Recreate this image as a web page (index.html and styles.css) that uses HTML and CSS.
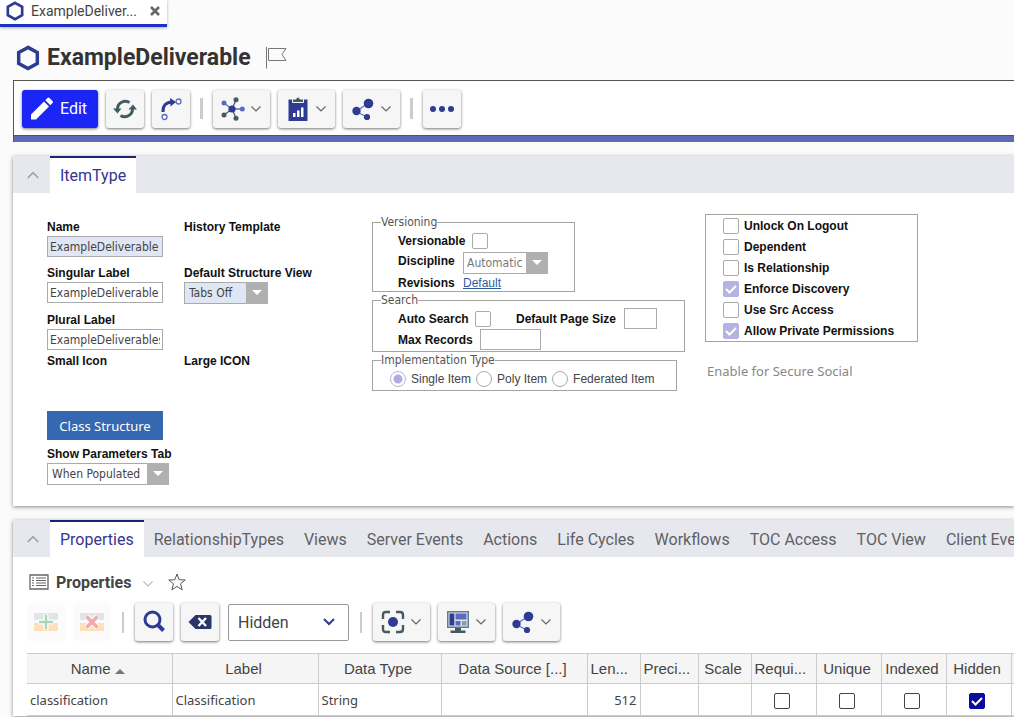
FILE: index.html
```html
<!DOCTYPE html>
<html lang="en">
<head>
<meta charset="utf-8">
<title>ExampleDeliverable</title>
<link rel="stylesheet" href="styles.css">
</head>
<body>
<svg class="defs" aria-hidden="true">
  <symbol id="hex" viewBox="0 0 24 24"><path d="M12 2.200 20.600 7v10L12 21.800 3.400 17V7z" fill="none" stroke="#2e3b93" stroke-width="3.200"/></symbol>
  <symbol id="down" viewBox="0 0 12 8"><path d="M1.500 1.500 6 6l4.500-4.500" fill="none" stroke="currentColor" stroke-width="1.200"/></symbol>
  <symbol id="share" viewBox="0 0 24 24"><path d="M5 14.500 17.500 6M5 14.500l11 5.500" stroke="#5c6bc0" stroke-width="1.200"/><g fill="#2e3b93"><circle cx="5.500" cy="14" r="4.200"/><circle cx="17.500" cy="6.500" r="4.800"/><circle cx="16" cy="20" r="3.100"/></g></symbol>
</svg>

<nav class="window-tabs">
  <div class="window-tab">
    <svg class="i20"><use href="#hex"/></svg>
    <span>ExampleDeliver...</span>
    <button class="bare close" aria-label="Close tab"><svg width="10" height="10" viewBox="0 0 10 10"><path d="M1 1l8 8M9 1 1 9" stroke="#666" stroke-width="2.600"/></svg></button>
  </div>
</nav>

<main>
  <header class="title">
    <svg class="i26"><use href="#hex"/></svg>
    <h1>ExampleDeliverable</h1>
    <button class="bare flag" aria-label="Flag item"><svg width="22" height="22" viewBox="0 0 22 22" fill="none" stroke="#777"><path d="M1.500 0v21.500M3.500 1.500H21l-4 6 4 6H3.500z"/></svg></button>
  </header>

  <div class="toolbar" role="toolbar" aria-label="Item actions">
    <button class="btn edit"><svg width="24" height="24" viewBox="0 0 24 24" fill="#fff"><path d="M1 17.500 14 4.500l5 5L6 22.500H1zM15.300 3.200 17.500 1q1-1 2 0l3 3q1 1 0 2l-2.200 2.200z"/></svg>Edit</button>
    <button class="btn" aria-label="Refresh"><svg width="24" height="24" viewBox="0 0 24 24" fill="none" stroke="#455a64" stroke-width="3"><path d="M4.500 12A7.800 7.800 0 0 1 16.500 5.500M19.500 12A7.800 7.800 0 0 1 7.500 18.500"/><path d="M0 11.500h8.500l-4 5zM15.500 12.500H24l-4-5z" fill="#455a64" stroke="none"/></svg></button>
    <button class="btn" aria-label="Promote"><svg width="22" height="24" viewBox="0 0 22 24" fill="none"><path d="M3 15Q2.500 5.500 12 5" stroke="#2e3b93" stroke-width="3"/><path d="M10 1l6 4-5.500 4.500z" fill="#2e3b93"/><circle cx="18.500" cy="4.500" r="2.500" stroke="#5c6bc0" stroke-width="1.300"/><circle cx="4.500" cy="20" r="2.500" stroke="#5c6bc0" stroke-width="1.300"/></svg></button>
    <span class="sep"></span>
    <button class="btn menu" aria-label="Navigate"><svg width="24" height="24" viewBox="0 0 24 24"><path d="M11 12 3 6M11 12h10" stroke="#5c6bc0" stroke-width="1.300"/><path d="M11 12 15 3M11 12 3 18M11 12l4 9" stroke="#455a64" stroke-width="1.300"/><g fill="#455a64"><circle cx="15" cy="2.700" r="2.500"/><circle cx="3" cy="18" r="2.500"/><circle cx="15" cy="21.300" r="2.500"/></g><g fill="#5c6bc0"><circle cx="3" cy="6" r="2.500"/><circle cx="21.300" cy="12" r="2.500"/></g><circle cx="11" cy="12" r="3.600" fill="#2e3b93"/></svg><svg class="down"><use href="#down"/></svg></button>
    <button class="btn menu" aria-label="Reports"><svg width="24" height="26" viewBox="0 0 24 26"><path d="M2.500 3.500h19V25h-19z" fill="#2e3b93"/><path d="M6.500 3H10a2 2 0 0 1 4 0h3.500v3.500h-11z" fill="#455a64" stroke="#f5f5f5" stroke-width="1"/><path d="M7 17h2.500v4H7zM11 14.500h2.500V21H11zM15 11.500h2.500V21H15z" fill="#fff"/></svg><svg class="down"><use href="#down"/></svg></button>
    <button class="btn menu" aria-label="Share"><svg class="i24"><use href="#share"/></svg><svg class="down"><use href="#down"/></svg></button>
    <span class="sep"></span>
    <button class="btn" aria-label="More"><svg width="24" height="8" viewBox="0 0 24 8" fill="#2e3b93"><circle cx="3" cy="4" r="3"/><circle cx="12" cy="4" r="3"/><circle cx="21" cy="4" r="3"/></svg></button>
  </div>

  <section class="panel">
    <div class="tabs" role="tablist">
      <button class="bare collapse" aria-label="Collapse form"><svg class="down up"><use href="#down"/></svg></button>
      <button class="tab active" role="tab">ItemType</button>
    </div>
    <form class="form">
      <div class="fields">
        <div class="field"><label for="name">Name</label><input id="name" class="text filled" value="ExampleDeliverable"></div>
        <div class="field"><span class="label">History Template</span></div>
        <div class="field"><label for="singular">Singular Label</label><input id="singular" class="text" value="ExampleDeliverable"></div>
        <div class="field"><label for="view">Default Structure View</label><span class="drop tabs-off"><select id="view"><option>Tabs Off</option></select></span></div>
        <div class="field"><label for="plural">Plural Label</label><input id="plural" class="text" value="ExampleDeliverables"></div>
        <div class="field"></div>
        <div class="field icon-field"><span class="label">Small Icon</span></div>
        <div class="field icon-field"><span class="label">Large ICON</span></div>
        <button type="button" class="class-btn">Class Structure</button>
        <div class="field params"><label for="params">Show Parameters Tab</label><span class="drop"><select id="params"><option>When Populated</option></select></span></div>
      </div>
      <div class="groups">
        <fieldset class="w-version">
          <legend>Versioning</legend>
          <div class="row"><label for="versionable" class="wide">Versionable</label><input id="versionable" type="checkbox" class="check"></div>
          <div class="row"><label for="discipline" class="raised">Discipline</label><span class="drop grey"><select id="discipline"><option>Automatic</option></select></span></div>
          <div class="row short"><span class="label">Revisions</span><a href="#">Default</a></div>
        </fieldset>
        <fieldset class="w-search">
          <legend>Search</legend>
          <div class="row"><label for="auto" class="auto">Auto Search</label><input id="auto" type="checkbox" class="check"><label for="page" class="page">Default Page Size</label><input id="page" class="text tiny"></div>
          <div class="row"><label for="max" class="max">Max Records</label><input id="max" class="text small"></div>
        </fieldset>
        <fieldset class="w-impl">
          <legend>Implementation Type</legend>
          <div class="row radios">
            <label><input type="radio" name="impl" checked>Single Item</label>
            <label><input type="radio" name="impl">Poly Item</label>
            <label><input type="radio" name="impl">Federated Item</label>
          </div>
        </fieldset>
      </div>
      <div class="flags">
        <div class="flag-box">
          <label><input type="checkbox" class="check">Unlock On Logout</label>
          <label><input type="checkbox" class="check">Dependent</label>
          <label><input type="checkbox" class="check">Is Relationship</label>
          <label><input type="checkbox" class="check" checked>Enforce Discovery</label>
          <label><input type="checkbox" class="check">Use Src Access</label>
          <label><input type="checkbox" class="check" checked>Allow Private Permissions</label>
        </div>
        <p class="social">Enable for Secure Social</p>
      </div>
    </form>
  </section>

  <section class="panel">
    <div class="tabs" role="tablist">
      <button class="bare collapse" aria-label="Collapse relationships"><svg class="down up"><use href="#down"/></svg></button>
      <button class="tab active" role="tab">Properties</button>
      <button class="tab" role="tab">RelationshipTypes</button>
      <button class="tab" role="tab">Views</button>
      <button class="tab" role="tab">Server Events</button>
      <button class="tab" role="tab">Actions</button>
      <button class="tab" role="tab">Life Cycles</button>
      <button class="tab" role="tab">Workflows</button>
      <button class="tab" role="tab">TOC Access</button>
      <button class="tab" role="tab">TOC View</button>
      <button class="tab" role="tab">Client Events</button>
    </div>
    <div class="grid-title">
      <svg width="20" height="16" viewBox="0 0 20 16" fill="none" stroke="#666"><path d="M1 1h18v14H1z" stroke-width="1.300"/><path d="M3 4h2M7 4h10M3 6.500h2M7 6.500h10M3 9h2M7 9h10M3 11.500h2M7 11.500h10" stroke-width="1.200"/></svg>
      <h2>Properties</h2>
      <button class="bare pale" aria-label="Properties menu"><svg class="down"><use href="#down"/></svg></button>
      <button class="bare" aria-label="Favorite"><svg width="18" height="18" viewBox="0 0 18 18"><path d="M9 1l2.200 5.700 6 .3-4.700 3.800 1.700 6L9 13.400l-5.200 3.400 1.700-6L.8 7l6-.3z" fill="none" stroke="#555"/></svg></button>
    </div>
    <div class="grid-tools" role="toolbar" aria-label="Grid actions">
      <button class="btn off" disabled aria-label="Add row"><svg width="26" height="22" viewBox="0 0 26 22"><path d="M1 2h24v7H1z" fill="#b8bfc6"/><path d="M1 12h24v8H1z" fill="#f9b24d"/><path d="M13 3.500v15M5.500 11h15" stroke="#fff" stroke-width="5"/><path d="M13 4v14M6 11h14" stroke="#2e9b4f" stroke-width="2.400"/></svg></button>
      <button class="btn off" disabled aria-label="Delete row"><svg width="26" height="22" viewBox="0 0 26 22"><path d="M1 2h24v7H1z" fill="#b8bfc6"/><path d="M1 12h24v8H1z" fill="#f9b24d"/><path d="M7.500 5.500l11 11M18.500 5.500l-11 11" stroke="#fff" stroke-width="5.500"/><path d="M7.500 5.500l11 11M18.500 5.500l-11 11" stroke="#d32f2f" stroke-width="3.600"/></svg></button>
      <span class="sep thin"></span>
      <button class="btn" aria-label="Search"><svg width="24" height="24" viewBox="0 0 24 24" fill="none" stroke="#2e3b93"><circle cx="10.500" cy="9.500" r="7.500" stroke-width="3"/><path d="M15.500 14.500l6 6" stroke-width="4"/></svg></button>
      <button class="btn" aria-label="Clear search"><svg width="24" height="16" viewBox="0 0 24 16"><path d="M7.500 1H22q1.500 0 1.500 1.500v11Q23.500 15 22 15H7.500L.5 8z" fill="#2b3566"/><path d="M10.500 4l7.500 8M18 4l-7.500 8" stroke="#fff" stroke-width="2.400"/></svg></button>
      <span class="mode"><select aria-label="Search mode"><option>Hidden</option></select><svg width="14" height="10" viewBox="0 0 14 10"><path d="M2 2l5 5 5-5" fill="none" stroke="#2e3b93" stroke-width="2"/></svg></span>
      <span class="sep thin"></span>
      <button class="btn menu" aria-label="Select view"><svg width="24" height="24" viewBox="0 0 24 24"><path d="M2 9V5q0-3 3-3h4M15 2h4q3 0 3 3v4M22 15v4q0 3-3 3h-4M9 22H5q-3 0-3-3v-4" fill="none" stroke="#455a64" stroke-width="2.400"/><circle cx="12" cy="12" r="5" fill="#2e3b93"/></svg><svg class="down"><use href="#down"/></svg></button>
      <button class="btn menu" aria-label="Display"><svg width="24" height="24" viewBox="0 0 24 24"><path d="M1 1h22v17H1z" fill="#607d8b"/><path d="M2.500 2.500h19v14h-19z" fill="#dfe3f1"/><path d="M3.500 3.500h4.800v12H3.500z" fill="#2e3b93"/><path d="M9.500 3.500h11v6h-11zM9.500 11h5v4.500h-5z" fill="#5c6bc0"/><path d="M16 11h4.500v4.500H16z" fill="#8d9aa5"/><path d="M9 18h6v2.500h4.500V23h-15v-2.500H9z" fill="#455a64"/></svg><svg class="down"><use href="#down"/></svg></button>
      <button class="btn menu" aria-label="Share rows"><svg class="i24"><use href="#share"/></svg><svg class="down"><use href="#down"/></svg></button>
    </div>
    <table>
      <colgroup><col class="c145"><col class="c146"><col class="c123"><col class="c146"><col class="c53"><col class="c58"><col class="c53"><col class="c65"><col class="c65"><col class="c65"><col class="c65"><col></colgroup>
      <thead>
        <tr><th>Name <span class="sort"></span></th><th>Label</th><th>Data Type</th><th>Data Source [...]</th><th class="start">Len...</th><th class="start">Preci...</th><th>Scale</th><th class="start">Requi...</th><th>Unique</th><th>Indexed</th><th>Hidden</th><th></th></tr>
      </thead>
      <tbody>
        <tr><td>classification</td><td>Classification</td><td>String</td><td></td><td class="num">512</td><td></td><td></td><td class="mid"><input type="checkbox" class="check dark" aria-label="Required"></td><td class="mid"><input type="checkbox" class="check dark" aria-label="Unique"></td><td class="mid"><input type="checkbox" class="check dark" aria-label="Indexed"></td><td class="mid"><input type="checkbox" class="check dark" aria-label="Hidden" checked></td><td></td></tr>
      </tbody>
    </table>
  </section>
</main>
</body>
</html>
```
FILE: styles.css
```css
* { box-sizing: border-box; }
body {
  margin: 0;
  background: #fbfbfb;
  color: #444;
  font-family: Roboto, "Liberation Sans", sans-serif;
  font-size: 16px;
  overflow: hidden;
}
button, input, select { font: inherit; color: inherit; margin: 0; }
svg { display: block; flex: none; }
.defs { position: absolute; width: 0; height: 0; }
.bare { border: 0; background: none; padding: 0; }
.i20 { width: 20px; height: 20px; }
.i24 { width: 24px; height: 24px; }
.i26 { width: 26px; height: 26px; }
.down { width: 12px; height: 8px; color: #666; }
.up { transform: rotate(180deg); }

/* window tab and title */
.window-tabs { display: flex; height: 27px; }
.window-tab {
  display: flex;
  align-items: center;
  gap: 6px;
  padding: 0 7px 3px 5px;
  width: 167px;
  background: #fff;
  border-bottom: 3px solid #2130c4;
  box-shadow: 0 1px 3px rgba(0, 0, 0, .3);
  font-size: 14px;
}
.close { margin-left: auto; }
main { padding-left: 13px; }
.title { display: flex; align-items: center; gap: 6px; height: 53px; padding: 8px 2px 0; }
h1 { margin: 0; font-size: 23px; line-height: 28px; font-weight: 700; color: #333; }
.flag { margin-left: 8px; }

/* toolbars */
.toolbar {
  display: flex;
  align-items: center;
  gap: 8px;
  height: 62px;
  padding: 0 8px 6px;
  background: #fff;
  border: 1px solid #555;
  border-right: 0;
  border-bottom: 0;
  box-shadow: inset 0 -6px #5f69b5, inset 0 -7px #555;
}
.btn {
  display: flex;
  align-items: center;
  justify-content: center;
  gap: 6px;
  min-width: 38px;
  height: 38px;
  padding: 0 7px;
  border: 0;
  border-radius: 3px;
  background: #f6f6f6;
  box-shadow: 0 1px 3px rgba(0, 0, 0, .55);
}
.btn.menu { padding: 0 8px; gap: 5px; }
.btn.edit { background: #1b25f5; color: #fff; padding: 0 11px 0 8px; }
.sep { width: 3px; height: 21px; margin: 0 2px; background: #ccc; }
.sep.thin { width: 2px; margin: 0 3px; }

/* panels */
.panel { background: #fff; box-shadow: 0 1px 4px rgba(0, 0, 0, .45); margin-bottom: 14px; }
.toolbar + .panel { margin-top: 14px; }
.tabs { display: flex; height: 37px; background: #e7e8ed; }
.collapse { width: 37px; display: grid; place-items: center; flex: none; padding-left: 2px; }
.collapse .down { width: 14px; height: 10px; color: #999; }
.tab { border: 0; border-top: 2px solid transparent; background: none; padding: 0 10px; color: #5f6066; white-space: nowrap; flex: none; }
.tab.active { background: #fff; border-top-color: #1c2175; color: #35358f; }

/* item form */
.form {
  display: grid;
  grid-template-columns: 325px 333px 1fr;
  min-height: 313px;
  padding: 21px 0 20px 34px;
  font-family: "Liberation Sans", Arial, sans-serif;
  font-size: 12px;
}
.fields { display: grid; grid-template-columns: 137px 1fr; align-content: start; row-gap: 7px; padding-top: 4px; }
.field { display: flex; flex-direction: column; align-items: flex-start; }
.field label, .label, .row label, .flag-box label { color: #111; font-weight: 700; line-height: 18px; white-space: nowrap; }
.text {
  height: 21px;
  width: 116px;
  padding: 0 2px;
  border: 1px solid #aaa;
  background: #fff;
  color: #444;
  font-family: "DejaVu Sans Condensed", "Noto Sans", sans-serif;
}
.filled { background: #dfe6f4; }
.icon-field { margin-top: -5px; height: 52px; }
.class-btn { justify-self: start; width: 116px; height: 29px; border: 0; padding: 0; background: #3568b0; color: #fff; font-family: "Noto Sans", sans-serif; font-size: 13px; }
.params { grid-column: 1 / -1; margin-top: -2px; }
.drop { position: relative; display: inline-flex; width: 122px; height: 22px; }
.drop.tabs-off { width: 84px; }
.drop.grey { width: 85px; }
.drop select {
  appearance: none;
  width: 100%;
  height: 100%;
  padding: 0 21px 0 4px;
  border: 1px solid #aaa;
  border-radius: 0;
  background: #fff;
  color: #444;
  font-family: "DejaVu Sans Condensed", "Noto Sans", sans-serif;
}
.drop.tabs-off select { background: #dfe6f4; }
.drop.grey select { color: #777; padding-left: 3px; }
.drop::before { content: ""; position: absolute; right: 0; width: 22px; height: 22px; background: #b0b0b0; pointer-events: none; }
.drop::after { content: ""; position: absolute; right: 6px; top: 8px; border: 5px solid transparent; border-top-color: #fff; border-bottom: 0; pointer-events: none; }

fieldset { margin: 0; padding: 0 0 0 25px; border: 1px solid #a5a5a0; }
legend { margin-left: -17px; padding: 0; line-height: 16px; font-family: "DejaVu Sans Condensed", "Noto Sans", sans-serif; color: #555; }
.w-version { width: 203px; }
.w-search { width: 313px; padding-bottom: 1px; }
.w-impl { width: 305px; padding-left: 17px; padding-bottom: 1px; }
.w-impl legend { margin-left: -9px; }
.row { display: flex; align-items: center; gap: 4px; height: 21px; }
.w-version .row { height: 22px; gap: 5px; }
.w-version .row.short { height: 17px; }
.w-version label, .w-version .label { min-width: 60px; }
.w-version .wide { min-width: 69px; }
.raised { align-self: flex-start; }
.auto { min-width: 73px; }
.max { min-width: 78px; }
.row a { color: #2e5d9f; }
.row .page { margin-left: 21px; min-width: 104px; }
.text.tiny { width: 33px; }
.text.small { width: 61px; }
.row.radios { gap: 5px; }
.row.radios label { display: flex; align-items: center; gap: 5px; font-weight: 400; color: #444; }
.check, .radios input { appearance: none; width: 16px; height: 16px; margin: 0; border: 1px solid #aaa; border-radius: 2px; background: #fff; flex: none; }
.check:checked {
  border-color: #b5b3e2;
  background: #b5b3e2 url("data:image/svg+xml,%3Csvg xmlns='http://www.w3.org/2000/svg' viewBox='0 0 14 14'%3E%3Cpath d='M2 7l3.500 3.500L12 4' fill='none' stroke='white' stroke-width='2'/%3E%3C/svg%3E");
}
.radios input { border-radius: 50%; }
.radios input:checked { border-color: #b5b3e2; background: radial-gradient(#b0aee0 0 4px, #fff 5px); }
.flag-box { width: 213px; padding: 0 17px; border: 1px solid #a5a5a0; }
.flag-box label { display: flex; align-items: center; gap: 5px; height: 21px; }
.social { margin: 18px 2px; line-height: 22px; color: #888; font-family: "Noto Sans", sans-serif; font-size: 13px; }

/* relationship grid */
.grid-title { display: flex; align-items: center; gap: 7px; height: 46px; padding: 4px 16px 0; }
h2 { margin: 0; font-size: 16px; font-weight: 700; }
.pale { padding: 4px 7px 0 4px; }
.pale .down { color: #bbb; }
.grid-tools { display: flex; align-items: center; gap: 8px; padding: 0 14px 12px; }
.btn.off { box-shadow: none; opacity: .4; padding: 0 6px; }
.mode { position: relative; display: inline-flex; align-items: center; width: 121px; height: 37px; margin-left: 1px; }
.mode select { appearance: none; width: 100%; height: 100%; border: 1px solid #999; border-radius: 2px; background: #fff; padding: 0 9px; }
.mode svg { position: absolute; right: 13px; pointer-events: none; }
table { width: calc(100% - 14px); margin-left: 14px; border-collapse: collapse; table-layout: fixed; }
.c145 { width: 145px; } .c146 { width: 146px; } .c123 { width: 123px; } .c53 { width: 53px; } .c58 { width: 58px; } .c65 { width: 65px; }
th, td { border: 1px solid #ccc; border-left: 0; padding: 0 3px; white-space: nowrap; overflow: hidden; }
th:last-child, td:last-child { padding: 0; border-right: 0; }
th { height: 30px; padding-right: 6px; background: #f5f5f5; font-family: "Liberation Sans", Arial, sans-serif; font-weight: 400; font-size: 15px; }
th.start { text-align: left; padding-right: 0; }
td { height: 32px; font-family: "Noto Sans", sans-serif; font-size: 13px; }
.num { text-align: right; }
.mid { text-align: center; padding-right: 6px; }
.mid .check { display: inline-block; vertical-align: middle; }
.check.dark { border: 1px solid #444; }
.check.dark:checked { border-color: #0b0b9c; background-color: #0b0b9c; }
.sort { display: inline-block; border: 5px solid transparent; border-bottom-color: #777; border-top: 0; }
```
